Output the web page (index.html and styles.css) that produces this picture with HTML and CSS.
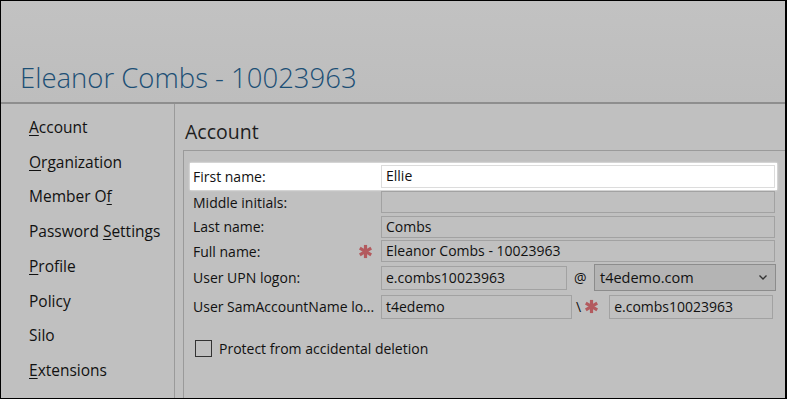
FILE: index.html
```html
<!DOCTYPE html>
<html>
<head>
    <meta charset="UTF-8">
    <title>Eleanor Combs - 10023963</title>
    <link rel="stylesheet" href="styles.css">
</head>
<body>
    <div class="window">
        <header class="header">
            <h1 class="title">Eleanor Combs - 10023963</h1>
        </header>

        <div class="main">
            <nav class="nav">
                <a href="#" class="nav-item"><u>A</u>ccount</a>
                <a href="#" class="nav-item"><u>O</u>rganization</a>
                <a href="#" class="nav-item">Member O<u>f</u></a>
                <a href="#" class="nav-item">Password <u>S</u>ettings</a>
                <a href="#" class="nav-item"><u>P</u>rofile</a>
                <a href="#" class="nav-item">Policy</a>
                <a href="#" class="nav-item">Silo</a>
                <a href="#" class="nav-item"><u>E</u>xtensions</a>
            </nav>

            <section class="content">
                <h2 class="section-title">Account</h2>

                <div class="group">
                    <div class="row row-first active">
                        <label class="label">First name:</label>
                        <div class="field field-white">Ellie</div>
                    </div>
                    <div class="row row-mid">
                        <label class="label">Middle initials:</label>
                        <div class="field"></div>
                    </div>
                    <div class="row row-last">
                        <label class="label">Last name:</label>
                        <div class="field">Combs</div>
                    </div>
                    <div class="row row-full">
                        <label class="label">Full name:
                            <svg class="star star-full" viewBox="0 0 16 16"><g stroke="#b35a5e" stroke-width="3.4" stroke-linecap="butt"><line x1="8" y1="1" x2="8" y2="15"/><line x1="1.9" y1="4.5" x2="14.1" y2="11.5"/><line x1="1.9" y1="11.5" x2="14.1" y2="4.5"/></g></svg>
                        </label>
                        <div class="field">Eleanor Combs - 10023963</div>
                    </div>
                    <div class="row row-upn">
                        <label class="label">User UPN logon:</label>
                        <div class="field field-upn">e.combs10023963</div>
                        <span class="sep sep-at">@</span>
                        <div class="select">
                            <span>t4edemo.com</span>
                            <svg class="chevron" viewBox="0 0 8 5"><path d="M0.5 0.6 L4 4 L7.5 0.6" fill="none" stroke="#333" stroke-width="1.4"/></svg>
                        </div>
                    </div>
                    <div class="row row-sam">
                        <label class="label">User SamAccountName lo...</label>
                        <div class="field field-domain">t4edemo</div>
                        <span class="sep sep-slash">\</span>
                        <svg class="star star-sam" viewBox="0 0 16 16"><g stroke="#b35a5e" stroke-width="3.4" stroke-linecap="butt"><line x1="8" y1="1" x2="8" y2="15"/><line x1="1.9" y1="4.5" x2="14.1" y2="11.5"/><line x1="1.9" y1="11.5" x2="14.1" y2="4.5"/></g></svg>
                        <div class="field field-sam">e.combs10023963</div>
                    </div>

                    <div class="check-row">
                        <span class="checkbox"></span>
                        <span>Protect from accidental deletion</span>
                    </div>
                </div>
            </section>
        </div>
    </div>
</body>
</html>
```

FILE: styles.css
```css
* {
    margin: 0;
    padding: 0;
    box-sizing: border-box;
}

body {
    background-color: #000;
    font-family: 'Open Sans', 'Noto Sans', sans-serif;
    color: #111;
}

.window {
    width: 787px;
    height: 399px;
    border: 1px solid #000;
    border-right-width: 2px;
    background-color: #c0c0c0;
    overflow: hidden;
    display: flex;
    flex-direction: column;
}

.header {
    height: 103px;
    flex-shrink: 0;
    background: linear-gradient(#c2c2c2, #bdbdbd);
    border-bottom: 2px solid #8e8e8e;
    display: flex;
    align-items: flex-end;
    padding: 0 0 6px 19px;
}

.title {
    font-weight: 300;
    font-size: 27.5px;
    line-height: 36px;
    color: #1c4f75;
}

.main {
    flex: 1;
    display: flex;
    min-height: 0;
}

.nav {
    width: 174px;
    flex-shrink: 0;
    border-right: 1px solid #9a9a9a;
    padding: 6px 0 0 28px;
    display: flex;
    flex-direction: column;
}

.nav-item {
    font-size: 15.5px;
    line-height: 34.7px;
    color: #111;
    text-decoration: none;
}

.nav-item u {
    text-underline-offset: 2px;
}

.content {
    flex: 1;
    padding: 14px 0 0 8px;
    display: flex;
    flex-direction: column;
}

.section-title {
    font-weight: 400;
    font-size: 19.5px;
    line-height: 28px;
    color: #1e1e1e;
    padding-left: 2px;
}

.group {
    flex: 1;
    margin-top: 4px;
    margin-right: -4px;
    border: 1px solid #9a9a9a;
    border-bottom: none;
    padding: 12px 0 0 6px;
    font-size: 14px;
}

.row {
    display: flex;
    align-items: center;
    width: 587px;
    padding-left: 3px;
}

.row-first { height: 27px; }
.row-mid { height: 24px; }
.row-last { height: 25px; }
.row-full { height: 24px; }
.row-upn { height: 29px; }
.row-sam { height: 29px; }

.active {
    background-color: #fff;
    box-shadow: 0 0 2px #fff;
}

.label {
    width: 188px;
    flex-shrink: 0;
    display: flex;
    align-items: center;
    white-space: nowrap;
}

.field {
    height: 22px;
    width: 394px;
    border: 1px solid #a2a2a2;
    padding: 0 4px;
    line-height: 20px;
    white-space: nowrap;
}

.field-white {
    height: 23px;
    background-color: #fff;
    border-color: #dcdcdc;
}

.row-upn .field,
.row-sam .field {
    height: 24px;
    line-height: 22px;
}

.field-upn { width: 186px; }
.field-domain { width: 191px; }
.field-sam { width: 164px; }

.star {
    width: 15px;
    height: 15px;
    flex-shrink: 0;
}

.star-full {
    margin-left: auto;
    margin-right: 8px;
}

.star-sam {
    margin: 0 10px 0 3px;
}

.sep {
    font-size: 14px;
}

.sep-at {
    width: 27px;
    padding-left: 7px;
}

.sep-slash {
    padding-left: 4px;
}

.select {
    width: 182px;
    height: 27px;
    border: 1px solid #8c8c8c;
    background-color: #b4b4b4;
    display: flex;
    align-items: center;
    justify-content: space-between;
    padding: 0 8px 0 5px;
    font-size: 14.5px;
}

.chevron {
    width: 8px;
    height: 5px;
}

.check-row {
    display: flex;
    align-items: center;
    gap: 7px;
    margin-top: 18px;
    padding-left: 5px;
}

.checkbox {
    width: 17px;
    height: 17px;
    border: 1px solid #333;
}
```
